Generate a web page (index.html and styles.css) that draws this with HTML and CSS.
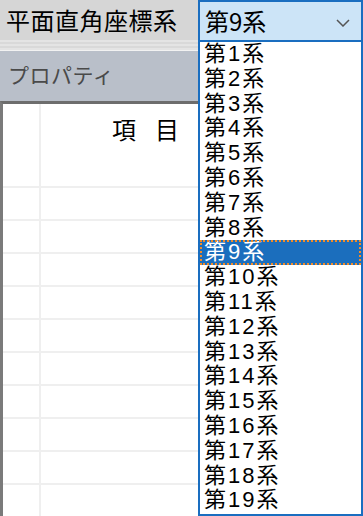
FILE: index.html
```html
<!DOCTYPE html>
<html lang="ja">
<head>
  <meta charset="UTF-8" />
  <title>平面直角座標系</title>
  <link rel="stylesheet" href="styles.css">
</head>
<body>
  <div class="toolbar">
    <span class="label">平面直角座標系</span>
    <div class="combo">
      <span class="combo-value">第9系</span>
      <svg class="chevron" width="14" height="8" viewBox="0 0 14 8">
        <path d="M1 1 L7 7 L13 1" fill="none" stroke="#555" stroke-width="1.5"/>
      </svg>
    </div>
  </div>
  <div class="stripes"></div>
  <div class="panel-header">プロパティ</div>
  <div class="grid">
    <div class="grid-head">
      <div class="cell-index head-index"></div>
      <div class="cell-name head-name">項目</div>
    </div>
    <div class="row"><div class="cell-index"></div><div class="cell-name"></div></div>
    <div class="row"><div class="cell-index"></div><div class="cell-name"></div></div>
    <div class="row"><div class="cell-index"></div><div class="cell-name"></div></div>
    <div class="row"><div class="cell-index"></div><div class="cell-name"></div></div>
    <div class="row"><div class="cell-index"></div><div class="cell-name"></div></div>
    <div class="row"><div class="cell-index"></div><div class="cell-name"></div></div>
    <div class="row"><div class="cell-index"></div><div class="cell-name"></div></div>
    <div class="row"><div class="cell-index"></div><div class="cell-name"></div></div>
    <div class="row"><div class="cell-index"></div><div class="cell-name"></div></div>
    <div class="row"><div class="cell-index"></div><div class="cell-name"></div></div>
    <div class="row"><div class="cell-index"></div><div class="cell-name"></div></div>
  </div>

  <ul class="dropdown">
    <li>第1系</li>
    <li>第2系</li>
    <li>第3系</li>
    <li>第4系</li>
    <li>第5系</li>
    <li>第6系</li>
    <li>第7系</li>
    <li>第8系</li>
    <li class="selected">第9系</li>
    <li>第10系</li>
    <li>第11系</li>
    <li>第12系</li>
    <li>第13系</li>
    <li>第14系</li>
    <li>第15系</li>
    <li>第16系</li>
    <li>第17系</li>
    <li>第18系</li>
    <li>第19系</li>
  </ul>
</body>
</html>
```

FILE: styles.css
```css
body {
  margin: 0;
  width: 363px;
  height: 516px;
  overflow: hidden;
  position: relative;
  background: #ffffff;
  font-family: "Noto Sans CJK JP", "Noto Sans", sans-serif;
  color: #000;
}

.toolbar {
  height: 40px;
  display: flex;
  align-items: flex-start;
  background: #d6d6d6;
}

.label {
  font-size: 24px;
  line-height: 40px;
  padding-left: 6px;
  width: 192px;
  letter-spacing: 0.5px;
}

.combo {
  box-sizing: border-box;
  width: 165px;
  height: 42px;
  border: 2px solid #1a6ec0;
  background: #cce4f7;
  display: flex;
  align-items: center;
  justify-content: space-between;
  padding: 0 11px 0 5px;
}

.combo-value {
  font-size: 24px;
  line-height: 36px;
}

.chevron {
  margin-top: 4px;
}

.stripes {
  height: 10px;
  background: repeating-linear-gradient(to bottom, #e4e4e4 0, #e4e4e4 2px, #d9d9d9 2px, #d9d9d9 4px);
  border-bottom: 1px solid #f2f2f2;
}

.panel-header {
  height: 50px;
  background: #b9bfc9;
  color: #4a4a4a;
  font-size: 21px;
  line-height: 46px;
  padding-left: 8px;
  letter-spacing: 0.5px;
}

.grid {
  border-top: 3px solid #6d6d6d;
  border-left: 3px solid #7a7a7a;
  height: 420px;
}

.grid-head {
  display: flex;
  height: 51px;
}

.head-index {
  width: 35px;
  border-right: 2px solid #e6e6e6;
}

.head-name {
  flex: 1;
  font-size: 24px;
  line-height: 50px;
  padding-left: 71px;
  letter-spacing: 19px;
}

.row {
  display: flex;
  height: 31px;
  border-bottom: 2px solid #efefef;
}

.cell-index {
  width: 36px;
  border-right: 2px solid #efefef;
}

.cell-name {
  flex: 1;
}

.dropdown {
  position: absolute;
  left: 198px;
  top: 42px;
  width: 165px;
  height: 474px;
  box-sizing: border-box;
  margin: 0;
  padding: 0;
  list-style: none;
  background: #ffffff;
  border: 2px solid #1a6ec0;
  border-top: none;
  overflow: hidden;
}

.dropdown li {
  font-family: "Liberation Sans", "Noto Sans CJK JP", sans-serif;
  font-size: 22px;
  line-height: 24.8px;
  height: 24.8px;
  padding-left: 4px;
  letter-spacing: 2px;
  white-space: nowrap;
}

.dropdown li.selected {
  background: #1b6ebd;
  color: #ffffff;
  outline: 2px dotted #f28c28;
  outline-offset: -2px;
}
```
